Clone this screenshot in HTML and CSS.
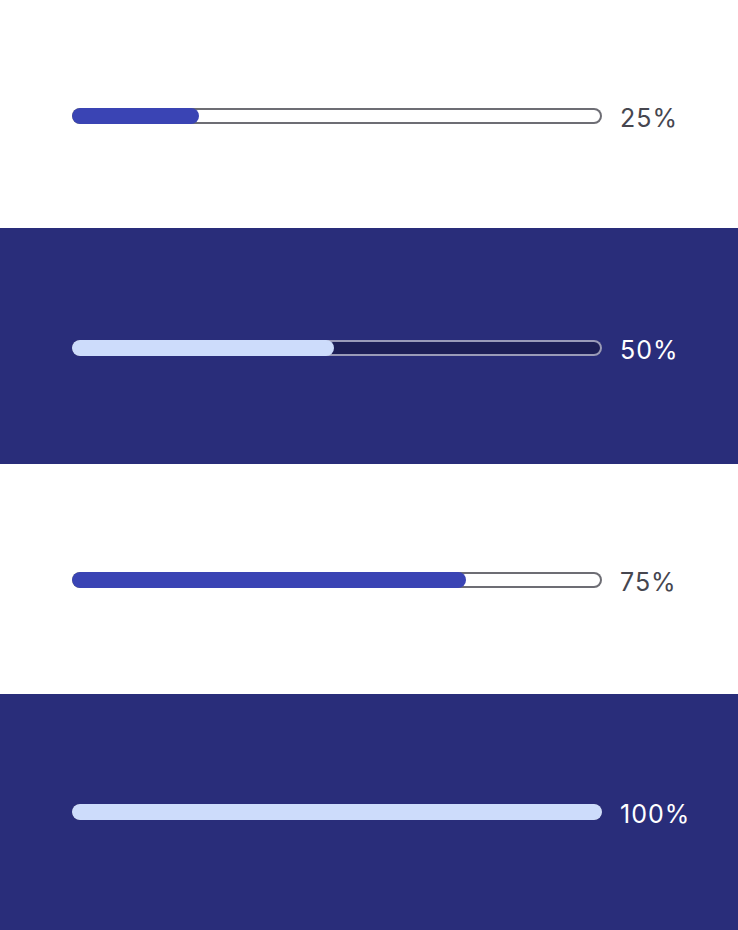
FILE: index.html
```html
<!DOCTYPE html>
<html>
<head>
<meta charset="utf-8">
<link rel="stylesheet" href="styles.css">
</head>
<body>
<section class="band band-light b1">
  <div class="row">
    <div class="track"><div class="fill" style="width:24%"></div></div>
    <span class="label">25%</span>
  </div>
</section>
<section class="band band-dark b2">
  <div class="row">
    <div class="track"><div class="fill" style="width:49.5%"></div></div>
    <span class="label">50%</span>
  </div>
</section>
<section class="band band-light b3">
  <div class="row">
    <div class="track"><div class="fill" style="width:74.3%"></div></div>
    <span class="label">75%</span>
  </div>
</section>
<section class="band band-dark b4">
  <div class="row">
    <div class="track"><div class="fill" style="width:100%"></div></div>
    <span class="label">100%</span>
  </div>
</section>
</body>
</html>
```
FILE: styles.css
```css
html, body {
  margin: 0;
  padding: 0;
  background: #ffffff;
}
body {
  font-family: Inter, "Noto Sans", sans-serif;
}
.band {
  box-sizing: border-box;
  padding-left: 72px;
}
.b1 { height: 228px; padding-top: 108px; }
.b2 { height: 236px; padding-top: 112px; }
.b3 { height: 230px; padding-top: 108px; }
.b4 { height: 236px; padding-top: 110px; }
.band-light { background: #ffffff; }
.band-dark { background: #292d7a; }
.row {
  display: flex;
  align-items: center;
  gap: 18px;
  height: 16px;
}
.track {
  width: 530px;
  height: 16px;
  border-radius: 8px;
  box-sizing: border-box;
  flex: none;
  overflow: hidden;
}
.band-light .track {
  background: #ffffff;
  box-shadow: inset 0 0 0 2px #6d6d74;
}
.band-dark .track {
  background: #1d1f57;
  box-shadow: inset 0 0 0 2px #9a9bb8;
}
.fill {
  height: 100%;
  border-radius: 8px;
}
.band-light .fill { background: #3a44b4; }
.band-dark .fill { background: #cddcfb; }
.label {
  font-size: 25px;
  line-height: 25px;
  letter-spacing: 1px;
  padding-top: 4px;
}
.band-light .label { color: #46464f; }
.band-dark .label { color: #ffffff; }
```
